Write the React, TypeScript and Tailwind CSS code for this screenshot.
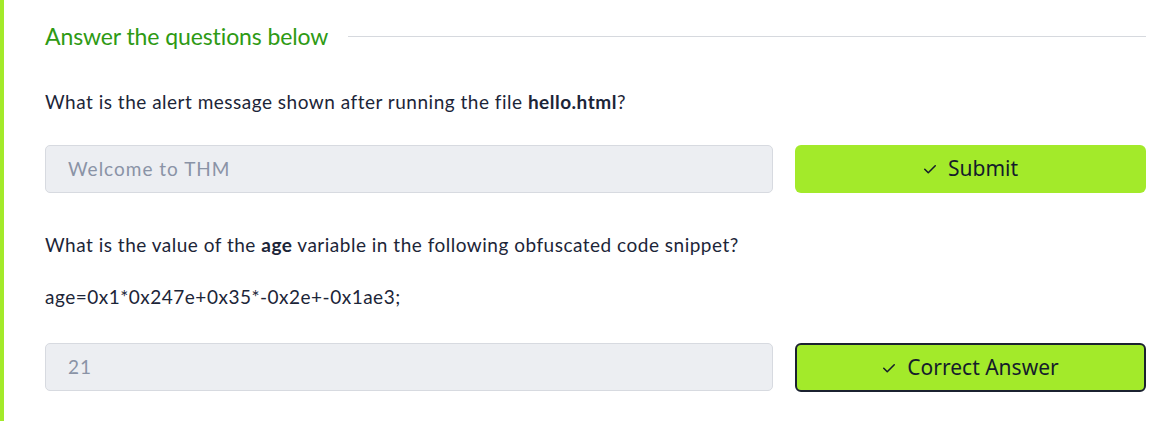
import React from 'react'

function Check() {
  return (
    <svg width="14" height="14" viewBox="0 0 24 24" fill="none" stroke="currentColor" strokeWidth="2.6" strokeLinecap="round" strokeLinejoin="round">
      <path d="M3 12.5l6 6L21 6.5" />
    </svg>
  )
}

function AnswerRow({ value, label, done }: { value: string; label: string; done?: boolean }) {
  return (
    <div className="flex gap-[22px]">
      <div className="flex-1 h-[48px] rounded-[5px] border border-[#d7dae0] bg-[#eceef2] flex items-center px-[22px] text-[19px] tracking-[1px] text-[#8a93a6]">
        {value}
      </div>
      <button
        className={
          done
            ? 'w-[351px] h-[49px] rounded-[6px] border-[2px] border-[#1b2230] bg-[#a3ea2a] flex items-center justify-center gap-[11px] text-[21px] text-[#151c2b] font-["Noto_Sans",sans-serif]'
            : 'w-[351px] h-[48px] rounded-[6px] bg-[#a3ea2a] flex items-center justify-center gap-[11px] text-[21px] text-[#151c2b] font-["Noto_Sans",sans-serif]'
        }
      >
        <Check />
        {label}
      </button>
    </div>
  )
}

export default function App() {
  return (
    <div className="w-[1159px] h-[421px] bg-white flex font-['Lato',sans-serif]">
      <div className="w-[4px] bg-[#a3ea2a]" />
      <div className="flex-1 pl-[41px] pr-[13px] pt-[20px]">
        <div className="flex items-center gap-[20px]">
          <h3 className="text-[23px] tracking-[-0.1px] text-[#2e9a14] leading-[32px]">Answer the questions below</h3>
          <div className="flex-1 h-px bg-[#d6d9de]" />
        </div>

        <p className="mt-[37px] text-[19px] tracking-[0.5px] leading-[26px] text-[#1c2538]">
          What is the alert message shown after running the file <b>hello.html</b>?
        </p>
        <div className="mt-[30px]">
          <AnswerRow value="Welcome to THM" label="Submit" />
        </div>

        <p className="mt-[39px] text-[19px] tracking-[0.5px] leading-[26px] text-[#1c2538]">
          What is the value of the <b>age</b> variable in the following obfuscated code snippet?
        </p>
        <p className="mt-[26px] text-[19px] tracking-[0.5px] leading-[26px] text-[#1c2538]">age=0x1*0x247e+0x35*-0x2e+-0x1ae3;</p>
        <div className="mt-[33px]">
          <AnswerRow value="21" label="Correct Answer" done />
        </div>
      </div>
    </div>
  )
}
